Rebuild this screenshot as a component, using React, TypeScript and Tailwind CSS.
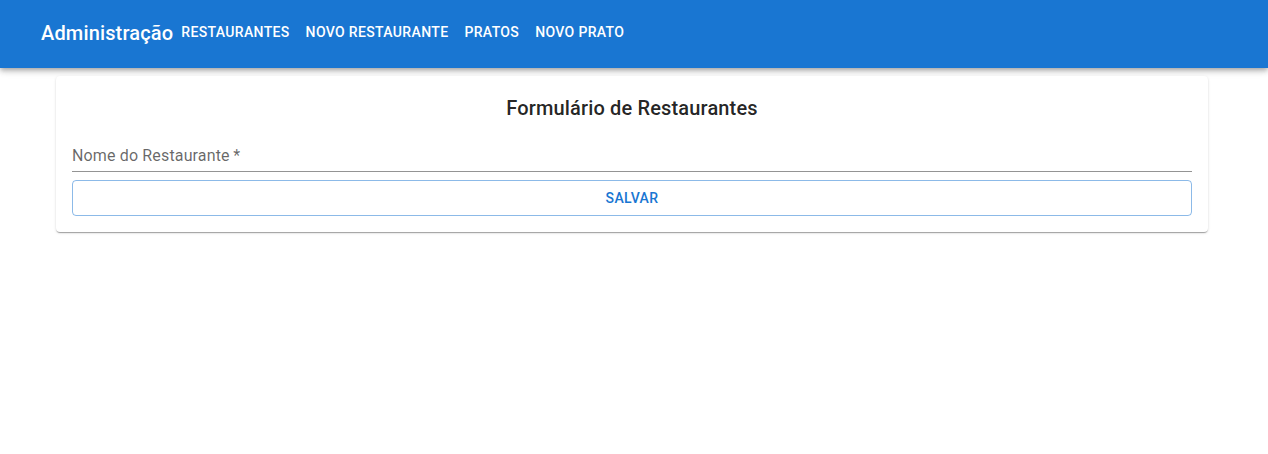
const links = ["Restaurantes", "Novo Restaurante", "Pratos", "Novo Prato"];

export default function App() {
  return (
    <div className="min-h-screen bg-white font-['Roboto','Liberation_Sans',sans-serif] text-black/87">
      <header className="bg-[#1976d2] text-white shadow-[0_2px_4px_-1px_rgba(0,0,0,0.2),0_4px_5px_0_rgba(0,0,0,0.14),0_1px_10px_0_rgba(0,0,0,0.12)]">
        <div className="mx-auto flex max-w-[1234px] items-start px-6 pt-4 pb-4">
          <p className="text-xl leading-[34px] font-medium tracking-[0.0075em]">Administração</p>
          <nav className="flex pb-1">
            {links.map((label) => (
              <a key={label} href="#" className="px-2 text-sm leading-8 font-medium tracking-wide uppercase">
                {label}
              </a>
            ))}
          </nav>
        </div>
      </header>
      <main className="pt-2 pr-1">
        <div className="mx-auto max-w-[1200px] px-6">
          <section className="rounded bg-white p-4 shadow-[0_2px_1px_-1px_rgba(0,0,0,0.2),0_1px_1px_0_rgba(0,0,0,0.14),0_1px_3px_0_rgba(0,0,0,0.12)]">
            <h1 className="text-center text-xl leading-8 font-medium tracking-[0.0075em]">Formulário de Restaurantes</h1>
            <form className="mt-4 flex flex-col gap-2">
              <div className="relative">
                <input
                  id="nome"
                  type="text"
                  required
                  placeholder=" "
                  className="peer block h-8 w-full border-b border-black/42 text-base outline-none focus:border-[#1976d2]"
                />
                <label
                  htmlFor="nome"
                  className="pointer-events-none absolute top-1 left-0 origin-top-left -translate-y-5 scale-75 text-base leading-6 tracking-[0.00938em] text-black/60 transition-transform peer-placeholder-shown:translate-y-0 peer-placeholder-shown:scale-100 peer-focus:-translate-y-5 peer-focus:scale-75 peer-focus:text-[#1976d2]"
                >
                  Nome do Restaurante{"\u2009*"}
                </label>
              </div>
              <button type="submit" className="h-9 w-full rounded border border-[#1976d2]/50 text-sm font-medium tracking-wide text-[#1976d2] uppercase">
                Salvar
              </button>
            </form>
          </section>
        </div>
      </main>
    </div>
  );
}
